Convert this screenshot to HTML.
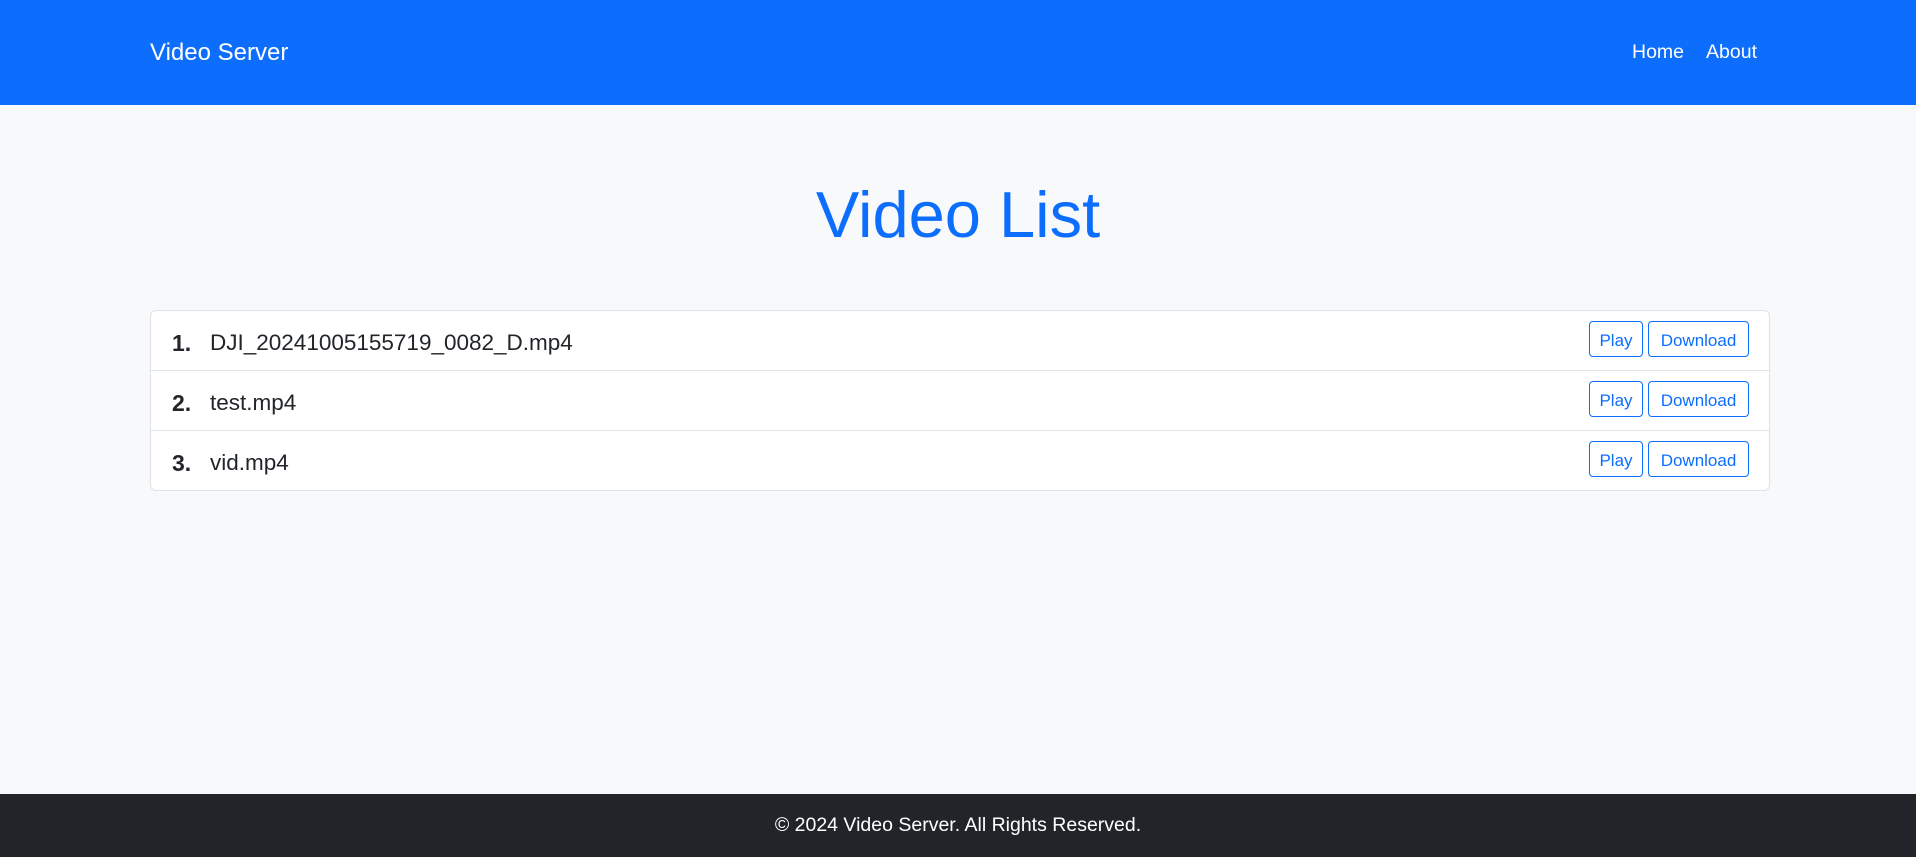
<!DOCTYPE html>
<html><head><style>
body{margin:0;width:1916px;height:857px;background:#f8f9fa;font-family:"Liberation Sans",sans-serif;position:relative;overflow:hidden;color:#212529}
.nav{position:absolute;left:0;top:0;width:1916px;height:105px;background:#0d6efd;color:#fff}
.brand{position:absolute;left:150px;top:39px;font-size:24px}
.links{position:absolute;left:1632px;top:41px;font-size:19.5px}
.links span{margin-right:22px}
h1{position:absolute;top:182px;left:0;width:1916px;text-align:center;margin:0;font-weight:300;font-size:65px;color:#0d6efd;line-height:1}
.list{position:absolute;left:150px;top:310px;width:1618px;border:1px solid #dee2e6;border-radius:6px;background:#fff}
.row{height:59px;border-top:1px solid #dee2e6;position:relative}
.row:first-child{border-top:none}
.num{position:absolute;left:21px;top:19px;font-weight:bold;font-size:23px}
.name{position:absolute;left:59px;top:19px;font-size:22.5px}
.btn{position:absolute;top:10px;height:36px;border:1px solid #0d6efd;border-radius:4px;color:#0d6efd;font-size:17px;line-height:37px;text-align:center;box-sizing:border-box}
.p{left:1438px;width:54px}.d{left:1497px;width:101px}
.foot{position:absolute;left:0;top:794px;width:1916px;height:63px;background:#212529;color:#fff;text-align:center;font-size:19.5px;line-height:63px}
</style></head><body>
<div class="nav"><div class="brand">Video Server</div><div class="links"><span>Home</span>About</div></div>
<h1>Video List</h1>
<div class="list">
<div class="row"><span class="num">1.</span><span class="name">DJI_20241005155719_0082_D.mp4</span><div class="btn p">Play</div><div class="btn d">Download</div></div>
<div class="row"><span class="num">2.</span><span class="name">test.mp4</span><div class="btn p">Play</div><div class="btn d">Download</div></div>
<div class="row"><span class="num">3.</span><span class="name">vid.mp4</span><div class="btn p">Play</div><div class="btn d">Download</div></div>
</div>
<div class="foot">© 2024 Video Server. All Rights Reserved.</div>
</body></html>
